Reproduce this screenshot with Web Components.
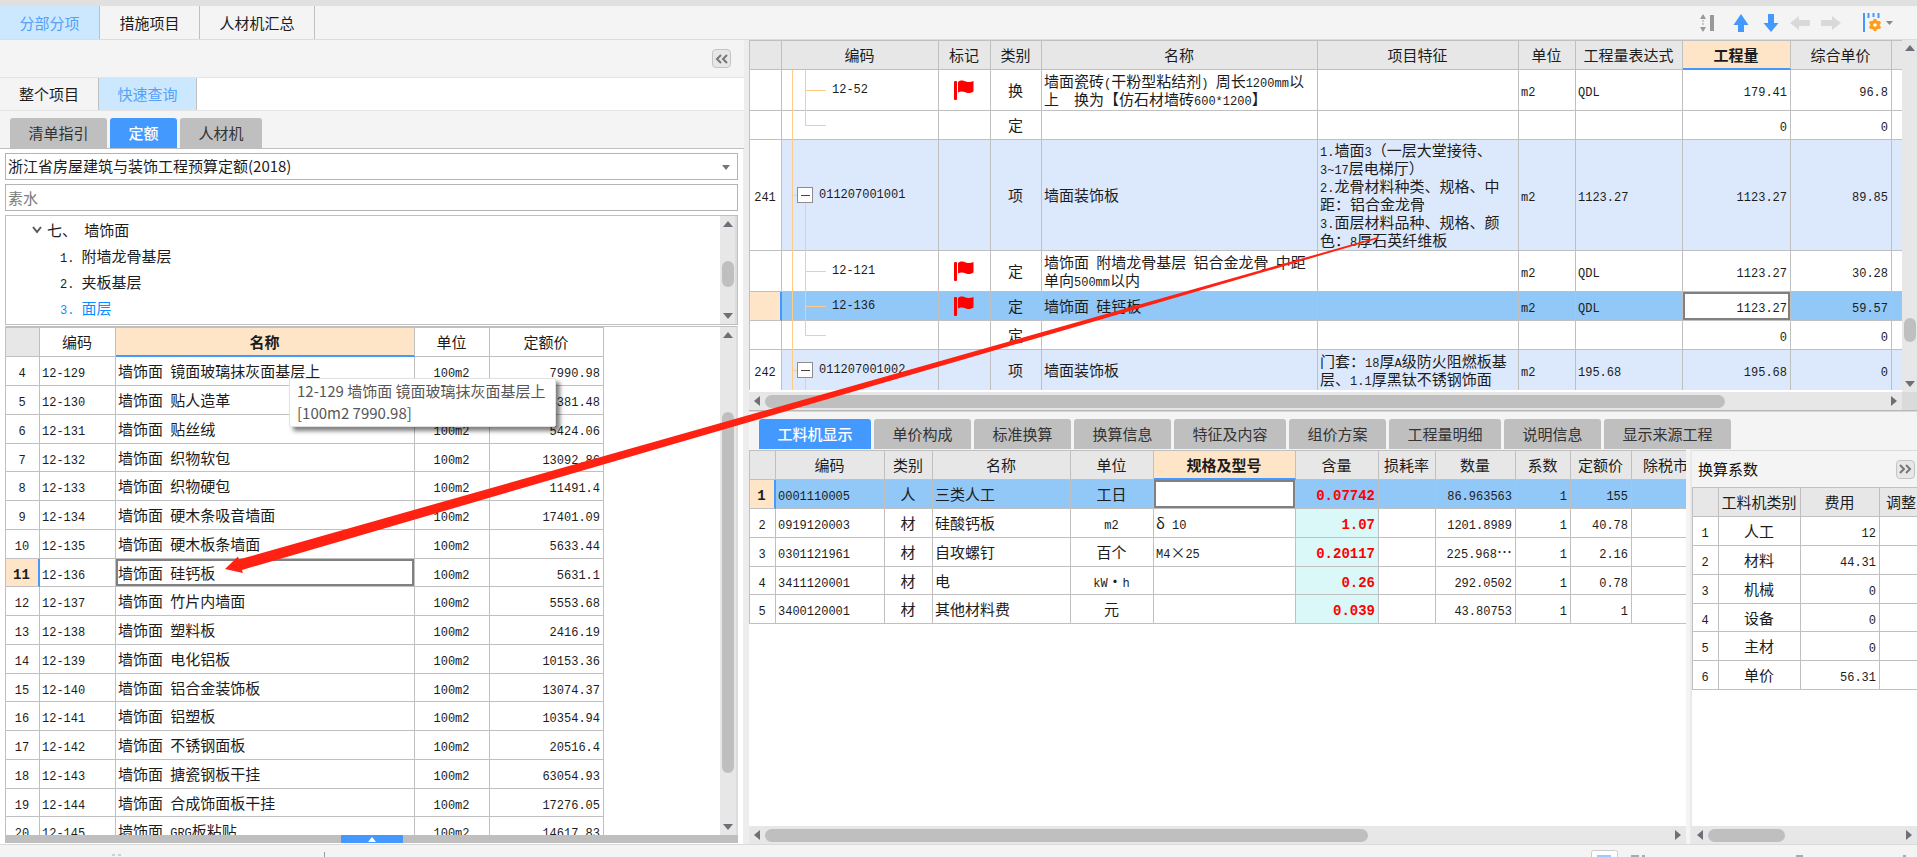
<!DOCTYPE html>
<html lang="zh-CN">
<head>
<meta charset="utf-8">
<title>工程计价 - 分部分项</title>
<style>
html,body{height:100%}
body{margin:0;overflow:hidden;background:#f4f4f4;color:#1c1c1c;font:15px/18px "Noto Sans CJK SC","Noto Sans",sans-serif;
--line:#c0c0c0;--bg:#f4f4f4;--head:#e7e7e7;--blue:#4499ff;--peach:#ffe5c8;--sel:#92c8f7;--item:#dce9fd;--mono:"Liberation Mono","Noto Sans CJK SC",monospace}
</style>
</head>
<body>
<cost-app></cost-app>
<script>
const define=(name,css,render)=>customElements.define(name,class extends HTMLElement{
  connectedCallback(){
    if(this.shadowRoot)return;
    const root=this.attachShadow({mode:'open'});
    root.innerHTML=`<style>*{box-sizing:border-box}${css}</style>${render(this)}`;
  }
});

/* Half-width runs are set in the monospaced face, ideographs in the CJK face. */
const mix=s=>String(s).split('\n').map(l=>l.replace(/[\x20-\x7e]+/g,m=>`<span class="n">${m}</span>`)).join('<br>');

/* Row of tabs: look="flat" for page tabs, look="raised" for panel tabs. */
define('tab-strip',`
:host{display:flex;align-items:stretch}
button{font:inherit;margin:0;padding:0;border:0;color:#1c1c1c;background:none;white-space:nowrap}
:host([look=flat]) button{border-right:1px solid var(--line)}
:host([look=flat]) button[aria-selected=true]{background:#cce8ff;color:#55a0f8}
:host([look=raised]){gap:3px}
:host([look=raised]) button{background:#bfbfbf;color:#333;border-radius:3px 3px 0 0}
:host([look=raised]) button[aria-selected=true]{background:var(--blue);color:#fff;font-weight:500}`,
el=>{
  const w=(el.getAttribute('widths')||'').split(',');
  return `<div role="tablist" style="display:contents">${el.getAttribute('tabs').split(',').map((t,i)=>
  `<button role="tab" aria-selected="${i==+el.getAttribute('active')}" style="width:${w[i]}px">${t}</button>`).join('')}</div>`;
});

/* Scrollbar: before, thumb and after are proportions of the track. */
define('scroll-bar',`
:host{display:flex;background:var(--head);height:18px;align-items:center}
:host([vertical]){flex-direction:column;width:16px;height:auto}
button{all:unset;flex:none;width:16px;height:16px;display:flex;align-items:center;justify-content:center}
svg{display:block;fill:#6f6f78}
.track{flex:1;align-self:stretch;display:flex;align-items:center;min-height:0;min-width:0}
:host([vertical]) .track{flex-direction:column}
.thumb{background:#bfbfbf;border-radius:7px;height:13px}
:host([vertical]) .thumb{width:12px;height:auto}`,
el=>{
  const v=el.hasAttribute('vertical'),[a,b,c]=el.getAttribute('parts').split(',');
  const p=v?['M0 6 5 0l5 6z','M0 0h10L5 6z']:['M6 0v10L0 5z','M0 0v10l6-5z'];
  const s=v?'width="10" height="6"':'width="6" height="10"';
  return `<button aria-label="后退"><svg ${s}><path d="${p[0]}"/></svg></button>
  <div class="track"><i style="flex:${a} 1 0"></i><div class="thumb" style="flex:${b} 1 0"></div><i style="flex:${c} 1 0"></i></div>
  <button aria-label="前进"><svg ${s}><path d="${p[1]}"/></svg></button>`;
});

define('red-flag',`:host{display:inline-block;vertical-align:middle}svg{display:block}`,
()=>`<svg width="20" height="20" viewBox="0 0 20 20" fill="red"><rect x="0" y="1" width="3" height="19" rx="1"/><path d="M4 2C7-.5 9 .5 12 1.500 15 2.500 17 2 19.500 1V11.500C17 13 15 13.500 12 12.500 9 11.500 7 11 4 12.500z"/></svg>`);

/* Branch lines in front of a code; kind: item, child or last. */
define('tree-code',`
:host{display:flex;align-items:center;position:absolute;inset:0}
i{position:absolute;background:#ffcb88}
.a{left:10px;width:1px;top:0;bottom:-1px}
.b{left:23px;width:1px;top:0;bottom:-1px}
.h{left:23px;width:21px;height:1px;top:50%}
:host([kind=last]) .b{bottom:50%}
:host([kind=item]) .b{top:50%}
:host([kind=item]) .h{left:10px;width:6px}
button{position:relative;width:16px;height:16px;padding:0;margin:0 6px 0 15px;border:1px solid #8c8c8c;background:#fff;display:flex;align-items:center;justify-content:center;flex:none}
button:before{content:"";width:9px;height:1px;background:#444}
span{font:12px/18px var(--mono)}
:host([kind=child]) span{margin-left:50px}`,
el=>`<i class="a"></i><i class="b"></i><i class="h"></i>${el.getAttribute('kind')=='item'?'<button aria-label="折叠"></button>':''}<span><slot></slot></span>`);

/* Data grid drawn from a named sheet. */
const code=(k,s)=>({html:`<tree-code kind="${k}">${s}</tree-code>`});
const flag={html:'<red-flag></red-flag>'};
const sheets={
quota:{w:[34,76,299,75,114],a:'cllcr',head:['','编码','名称','单位','定额价'],active:2,hh:30,
 rows:[['129','镜面玻璃抹灰面基层上','7990.98'],['130','贴人造革','5381.48'],['131','贴丝绒','5424.06'],['132','织物软包','13092.86'],['133','织物硬包','11491.4'],['134','硬木条吸音墙面','17401.09'],['135','硬木板条墙面','5633.44'],['136','硅钙板','5631.1'],['137','竹片内墙面','5553.68'],['138','塑料板','2416.19'],['139','电化铝板','10153.36'],['140','铝合金装饰板','13074.37'],['141','铝塑板','10354.94'],['142','不锈钢面板','20516.4'],['143','搪瓷钢板干挂','63054.93'],['144','合成饰面板干挂','17276.05'],['145','GRG板粘贴','14617.83']]
 .map((r,i)=>({c:r[0]=='136'?'cur':'',pick:r[0]=='136'?2:-1,d:[i+4,'12-'+r[0],'墙饰面 '+r[1],'100m2',r[2]]}))},
bill:{w:[32,157,52,51,276,201,57,107,108,101,12],a:'clccllllrrl',head:['','编码','标记','类别','名称','项目特征','单位','工程量表达式','工程量','综合单价',''],active:8,hh:30,
 rows:[
 {h:41,d:['',code('child','12-52'),flag,'换','墙面瓷砖(干粉型粘结剂) 周长1200mm以\n上　换为【仿石材墙砖600*1200】','','m2','QDL','179.41','96.8','']},
 {h:29,d:['',code('last',''),'','定','','','','','0','0','']},
 {h:111,c:'item',d:['241',code('item','011207001001'),'','项','墙面装饰板','1.墙面3（一层大堂接待、\n3~17层电梯厅）\n2.龙骨材料种类、规格、中\n距：铝合金龙骨\n3.面层材料品种、规格、颜\n色：8厚石英纤维板','m2','1123.27','1123.27','89.85','']},
 {h:41,d:['',code('child','12-121'),flag,'定','墙饰面 附墙龙骨基层 铝合金龙骨 中距\n单向500mm以内','','m2','QDL','1123.27','30.28','']},
 {h:29,c:'cur sel',pick:8,d:['',code('child','12-136'),flag,'定','墙饰面 硅钙板','','m2','QDL','1123.27','59.57','']},
 {h:29,d:['',code('last',''),'','定','','','','','0','0','']},
 {h:41,c:'item',d:['242',code('item','011207001002'),'','项','墙面装饰板','门套：18厚A级防火阻燃板基\n层、1.1厚黑钛不锈钢饰面','m2','195.68','195.68','0','']}]},
labor:{w:[26,109,48,138,83,142,83,57,80,55,61,97],a:'clclclrrrrrl',head:['','编码','类别','名称','单位','规格及型号','含量','损耗率','数量','系数','定额价','除税市'],active:5,hot:6,hh:30,
 rows:[
 {c:'cur sel',pick:5,d:[1,'0001110005','人','三类人工','工日','','0.07742','','86.963563','1','155','']},
 {d:[2,'0919120003','材','硅酸钙板','m2','δ 10','1.07','','1201.8989','1','40.78','']},
 {d:[3,'0301121961','材','自攻螺钉','百个','M4×25','0.20117','','225.968…','1','2.16','']},
 {d:[4,'3411120001','材','电','kW・h','','0.26','','292.0502','1','0.78','']},
 {d:[5,'3400120001','材','其他材料费','元','','0.039','','43.80753','1','1','']}]},
factor:{w:[26,82,79,60],a:'ccrl',head:['','工料机类别','费用','调整系数'],active:-1,hh:30,
 rows:[['人工','12'],['材料','44.31'],['机械','0'],['设备','0'],['主材','0'],['单价','56.31']].map((r,i)=>({d:[i+1,r[0],r[1],'']}))}
};
define('data-grid',`
:host{display:block;overflow:hidden;background:#fff;min-width:0;min-height:0}
table{table-layout:fixed;border-collapse:separate;border-spacing:0;border-left:1px solid var(--line)}
th,td{position:relative;padding:0 3px 0 2px;border-right:1px solid var(--line);border-bottom:1px solid var(--line);white-space:nowrap;overflow:hidden;font-weight:400;height:29px;text-align:left}
th{background:var(--head);border-top:1px solid var(--line);text-align:center}
:host([sheet=quota]) th:not(:first-child){background:#fff}
:host(:not([sheet=bill])) tr:nth-child(4n) td{height:28px}
:host([sheet=labor]) td:nth-child(12),:host([sheet=labor]) th:nth-child(12){text-align:left;padding-left:11px}
:host([sheet=factor]) th:nth-child(4){text-align:left;padding-left:6px}
:host([sheet=bill]) :is(td,th):last-child{border-right:0}
th.act,:host([sheet=quota]) th.act{background:var(--peach);font-weight:700;border-bottom:2px solid var(--blue)}
.n{font-size:12px;line-height:0;font-family:var(--mono)}
.c{text-align:center}.r{text-align:right}
.item td:nth-child(n+2){background:var(--item)}
td.hot{background:#dbf8f8}
.hot .n{font-size:14px;font-weight:700;color:red}
.sel td:nth-child(n+2){background:var(--sel)}
.cur td:first-child{background:var(--peach);border-right:2px solid var(--blue)}
.cur td:first-child .n{font-weight:700;font-size:14px}
.cur td.pick{background:#fff;box-shadow:inset 0 0 0 2px #808080}
td.tree{overflow:visible}`,
el=>{
  const s=sheets[el.getAttribute('sheet')];
  return `<table style="width:${s.w.reduce((a,b)=>a+b,1)}px"><colgroup>${s.w.map(w=>`<col style="width:${w}px">`).join('')}</colgroup>
  <thead><tr>${s.head.map((h,i)=>`<th scope="col" class="${i==s.active?'act':''}" style="height:${s.hh}px">${h}</th>`).join('')}</tr></thead>
  <tbody>${s.rows.map(r=>`<tr class="${r.c||''}">${r.d.map((v,i)=>`<td class="${s.a[i]}${i===s.hot?' hot':''}${i===r.pick?' pick':''}${v.html&&i==1?' tree':''}"${r.h?` style="height:${r.h}px"`:''}>${v.html||mix(v)}</td>`).join('')}</tr>`).join('')}</tbody></table>`;
});

define('chapter-tree',`
:host{display:flex;border:1px solid var(--line);background:#fff}
ul{list-style:none;margin:0;padding:1px 0 0;flex:1;min-width:0;overflow:hidden}
li{height:26px;line-height:26px;padding-left:54px;white-space:pre;cursor:default}
li.top{padding-left:26px;display:flex;align-items:center;gap:5px}
li.on{color:#0a8fff}
scroll-bar{border-right:2px solid #dcdcdc;width:17px}
.n{font-size:12px;line-height:0;font-family:var(--mono)}`,
()=>`<ul role="tree"><li class="top" role="treeitem"><svg width="10" height="8" fill="none" stroke="#555" stroke-width="2"><path d="M1 1l4 5 4-5"/></svg><span>七、${mix(' ')}墙饰面</span></li>
<li role="treeitem">${mix('1. 附墙龙骨基层')}</li><li role="treeitem">${mix('2. 夹板基层')}</li><li role="treeitem" class="on">${mix('3. 面层')}</li></ul><scroll-bar vertical parts="29,26,21"></scroll-bar>`);

define('hover-tip',`:host{display:block;background:#fff;border:1px solid #e2e2e2;border-radius:2px;box-shadow:4px 4px 4px rgba(0,0,0,.5);padding:1px 9px 2px 7px;line-height:22px;color:#575757;white-space:nowrap}`,()=>`<slot></slot>`);

define('fold-button',`:host{display:inline-block}button{width:19px;height:19px;padding:0;border:1px solid #c4c4c4;border-radius:4px;background:#e7e7e7;display:flex;align-items:center;justify-content:center}`,
el=>`<button aria-label="收起"><svg width="13" height="10" fill="none" stroke="#777" stroke-width="2"><path d="${el.getAttribute('to')=='right'?'M1 1l4 4-4 4M7 1l4 4-4 4':'M6 1 2 5l4 4M12 1 8 5l4 4'}"/></svg></button>`);

define('quota-panel',`
:host{display:flex;flex-direction:column;min-width:0;min-height:0;background:#fff}
.fold{height:37px;background:var(--bg);display:flex;align-items:center;justify-content:flex-end;padding-right:13px}
.pages{height:34px;border:solid #e4e4e4;border-width:1px 0;display:flex}
.pages tab-strip{background:var(--bg)}
.kinds{height:38px;padding:7px 0 0 10px;background:var(--bg);border-bottom:1px solid var(--line);display:flex}
.body{flex:1;min-height:0;display:flex;flex-direction:column;padding:4px 5px 0;border-right:1px solid #eee}
label{display:flex;position:relative;margin-bottom:4px}
select,input{font:inherit;color:#1c1c1c;appearance:none;width:100%;height:27px;border:1px solid #b4b4b4;border-radius:0;background:#fff;padding:0 3px 1px 2px;margin:0;outline:0}
input{color:#7c7c7c}
label svg{position:absolute;right:8px;top:12px}
chapter-tree{height:110px;flex:none;margin-bottom:2px}
.sheet{position:relative;display:flex;flex:1;min-height:0;border-top:1px solid var(--line);border-right:2px solid #dcdcdc;margin-top:-1px}
data-grid{flex:1}
hover-tip{position:absolute;left:284px;top:51px}
.drawer{height:8px;background:#bfbfbf;display:flex;justify-content:center;margin-bottom:1px}
.drawer button{width:62px;height:8px;padding:0;border:0;background:var(--blue);display:flex;justify-content:center;align-items:center}`,
()=>`<div class="fold"><fold-button to="left"></fold-button></div>
<div class="pages"><tab-strip look="flat" tabs="整个项目,快速查询" widths="99,98" active="1"></tab-strip></div>
<div class="kinds"><tab-strip look="raised" tabs="清单指引,定额,人材机" widths="97,67,82" active="1"></tab-strip></div>
<div class="body">
<label><select aria-label="定额库"><option>浙江省房屋建筑与装饰工程预算定额(2018)</option></select><svg width="8" height="5" fill="#777"><path d="M0 0h8L4 5z"/></svg></label>
<label><input type="text" aria-label="查询" value="素水"></label>
<chapter-tree></chapter-tree>
<div class="sheet"><data-grid sheet="quota"></data-grid><scroll-bar vertical parts="69,360,46"></scroll-bar>
<hover-tip>12-129 墙饰面 镜面玻璃抹灰面基层上<br>[100m2 7990.98]</hover-tip></div>
<div class="drawer"><button aria-label="展开"><svg width="8" height="5" fill="#fff"><path d="M0 5 4 0l4 5z"/></svg></button></div>
</div>`);

define('bill-panel',`
:host{display:grid;grid-template:minmax(0,1fr) 18px / minmax(0,1fr) 15px;background:var(--head);min-height:0;min-width:0}
data-grid{border-bottom:2px solid #fff}
.side{width:15px}
.corner{background:#dadada}`,
()=>`<data-grid sheet="bill"></data-grid><scroll-bar vertical class="side" parts="261,24,34"></scroll-bar><scroll-bar parts="0,959,161"></scroll-bar><div class="corner"></div>`);

define('detail-panel',`
:host{display:grid;grid-template-columns:minmax(0,937fr) 6px minmax(0,225fr);min-height:0;min-width:0}
section{display:flex;flex-direction:column;min-width:0;min-height:0;background:#fff}
data-grid{flex:1}
.split{background:#f4f4f4;border-right:2px solid #e9e9e9}
header{height:37px;display:flex;align-items:center;justify-content:space-between;background:var(--bg);border-top:1px solid #dcdcdc;padding:0 2px 0 6px;flex:none;color:#111}
scroll-bar{flex:none}`,
()=>`<section><data-grid sheet="labor"></data-grid><scroll-bar parts="0,602,302"></scroll-bar></section><div class="split"></div>
<section><header><span>换算系数</span><fold-button to="right"></fold-button></header><data-grid sheet="factor"></data-grid><scroll-bar parts="0,77,116"></scroll-bar></section>`);

define('tool-icons',`
:host{display:flex;align-items:center;padding-right:24px}
button{all:unset;display:flex;margin-left:11px}
.wide{margin-left:18px}.mid{margin-left:14px}.far{margin-left:22px}.near{margin-left:5px}`,
()=>`<button aria-label="行高"><svg width="15" height="18" fill="#999"><path d="M0 5l3-5 3 5zM0 13h6l-3 5zM10 1h4v16h-4z"/><path d="M3 6v6" stroke="#999" stroke-dasharray="2 1"/></svg></button>
<button aria-label="上移" class="wide"><svg width="16" height="18" fill="#4499ff"><path d="M8 0l7.500 11h-4.500v7H5v-7H.5z"/></svg></button>
<button aria-label="下移" class="mid"><svg width="16" height="18" fill="#4499ff"><path d="M8 18 .5 9H5V0h6v9h4.500z"/></svg></button>
<button aria-label="左移"><svg width="20" height="14" fill="#d9d9d9"><path d="M0 7l9-7v4h11v6H9v4z"/></svg></button>
<button aria-label="右移"><svg width="20" height="14" fill="#d9d9d9"><path d="M20 7l-9-7v4H0v6h11v4z"/></svg></button>
<button aria-label="列设置" class="far"><svg width="18" height="19"><path d="M1 0v19M5.500 0v5M10.500 0v4M15.500 0v5" stroke="#4499ff" stroke-width="2"/><g fill="#ff9c1a"><circle cx="12" cy="12" r="4.800"/><circle cx="12" cy="7.500" r="1.800"/><circle cx="12" cy="16.500" r="1.800"/><circle cx="8" cy="9.800" r="1.800"/><circle cx="16" cy="9.800" r="1.800"/><circle cx="8" cy="14.200" r="1.800"/><circle cx="16" cy="14.200" r="1.800"/></g><circle cx="12" cy="12" r="1.800" fill="#fff"/></svg></button>
<button aria-label="更多" class="near"><svg width="7" height="4" fill="#888"><path d="M0 0h7L3.500 4z"/></svg></button>`);

define('status-bar',`
:host{display:flex;align-items:flex-end;height:13px;background:var(--bg);border-top:1px solid #dadada;justify-content:space-between;padding:0 8px 0 112px;overflow:hidden}
svg{display:block;flex:none}`,
()=>`<svg width="214" height="5"><path d="M0 3h3M6 3h3" stroke="#aaa"/><path d="M212.500 0v5" stroke="#999"/></svg><svg width="318" height="7"><rect x=".5" y=".5" width="26" height="12" rx="2" fill="#fff" stroke="#ccc"/><rect x="6" y="5" width="14" height="2" fill="#9ccbff"/><path d="M40 6h8M51 6h3M205 6h7M312 6h3" stroke="#aaa" stroke-width="2"/></svg>`);

/* Tapered annotation arrow, stretched with the window. */
define('callout-arrow',`:host{position:absolute;inset:0;pointer-events:none}svg{display:block;width:100%;height:100%}`,
()=>`<svg viewBox="0 0 1917 857" preserveAspectRatio="none"><path fill="#ff2112" d="M225 569 238 556.400 238.800 559.500 1378 237 1378.500 238.500 242 569.900 242.900 572.900z"/></svg>`);

define('cost-app',`
:host{display:flex;flex-direction:column;height:100vh;position:relative}
.top{height:40px;border-top:6px solid #e0e0e0;border-bottom:1px solid #dcdcdc;display:flex;justify-content:space-between;flex:none;background:var(--bg)}
main{flex:1;min-height:0;display:grid;grid-template-columns:minmax(0,744fr) 5px minmax(0,1168fr)}
.gap{background:#ededed}
.right{display:grid;min-height:0;min-width:0;grid-template-rows:minmax(0,370fr) 40px minmax(0,394fr)}
.tabs{border-top:1px solid #b8b8b8;box-shadow:inset 0 1px #d8d8d8;padding:8px 0 1px 10px;display:flex;background:var(--bg)}`,
()=>`<div class="top"><tab-strip look="flat" tabs="分部分项,措施项目,人材机汇总" widths="100,100,115" active="0"></tab-strip><tool-icons></tool-icons></div>
<main><quota-panel></quota-panel><div class="gap"></div>
<div class="right"><bill-panel></bill-panel>
<div class="tabs"><tab-strip look="raised" tabs="工料机显示,单价构成,标准换算,换算信息,特征及内容,组价方案,工程量明细,说明信息,显示来源工程" widths="112,97,97,97,112,97,112,97,127" active="0"></tab-strip></div>
<detail-panel></detail-panel></div></main>
<status-bar></status-bar><callout-arrow></callout-arrow>`);
</script>
</body>
</html>
